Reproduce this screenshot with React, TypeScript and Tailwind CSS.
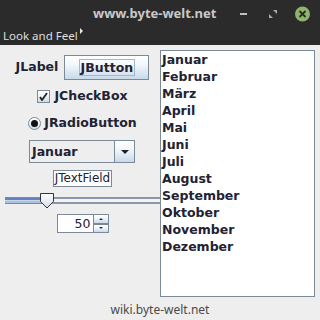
const months = [
  'Januar',
  'Februar',
  'März',
  'April',
  'Mai',
  'Juni',
  'Juli',
  'August',
  'September',
  'Oktober',
  'November',
  'Dezember'
];

const dialog = "font-['DejaVu_Sans',sans-serif]";
const ocean = 'bg-[linear-gradient(to_bottom,#ffffff_0%,#f4f8fc_35%,#dde8f3_70%,#c8d9ea_100%)]';

function TitleBar() {
  return (
    <div className="flex h-[28px] items-center bg-[#2b2b2b]">
      <span className="ml-[93px] font-['Noto_Sans',sans-serif] text-[13px] font-bold text-[#c9c9c9]">
        www.byte-welt.net
      </span>
      {/* window controls: minimize, restore, close */}
      <svg width="84" height="28" viewBox="0 0 84 28" className="ml-auto shrink-0">
        <path d="M4 14h7" stroke="#c0c0c0" strokeWidth="2" />
        <path d="M37 10h4v4zM33 14l4 4h-4z" fill="#a8a8a8" />
        <circle cx="66.5" cy="14" r="7.5" fill="#8db66a" />
        <path d="M63.5 11l6 6M69.5 11l-6 6" stroke="#2b2b2b" strokeWidth="1.8" />
      </svg>
    </div>
  );
}

function MenuBar() {
  return (
    <div className="flex h-[17px] items-start bg-[#2b2b2b] pl-[3px]">
      <span className="mt-[-1px] font-['Noto_Sans',sans-serif] text-[11.5px] leading-[17px] text-[#dedede]">
        Look and Feel
      </span>
      <span className="ml-[2px] h-0 w-0 border-y-[3.5px] border-l-[3px] border-y-transparent border-l-[#e8e8e8]" />
    </div>
  );
}

function Slider() {
  return (
    <div className="relative mt-[4px] h-[18px] w-full">
      <div className="absolute left-0 right-0 top-[6px] flex h-[7px]">
        <div className="flex w-[38px] flex-col">
          <div className="h-[1px] bg-[#7a8a99]" />
          <div className="h-[2px] bg-[#6382bf]" />
          <div className="h-[1px] bg-[#c9d8ea]" />
          <div className="h-[2px] bg-[#a9c0de]" />
          <div className="h-[1px] bg-[#7a8a99]" />
        </div>
        <div className="flex flex-1 flex-col">
          <div className="h-[2px] bg-[#8a97a4]" />
          <div className="h-[3px] bg-[#f4f4f4]" />
          <div className="h-[2px] bg-[#8a97a4]" />
        </div>
      </div>
      <svg width="16" height="18" viewBox="0 0 16 18" className="absolute left-[34px] top-[1px]">
        <defs>
          <linearGradient id="thumb" x1="0" y1="0" x2="0" y2="1">
            <stop offset="0" stopColor="#ffffff" />
            <stop offset="1" stopColor="#cfdcea" />
          </linearGradient>
        </defs>
        <path d="M1.5 1.5h13v8l-6.5 6.5-6.5-6.5z" fill="url(#thumb)" stroke="#333333" strokeWidth="1" />
      </svg>
    </div>
  );
}

export default function App() {
  return (
    <div className={`flex h-[320px] w-[320px] flex-col bg-[#eeeeee] ${dialog}`}>
      <TitleBar />
      <MenuBar />

      <div className="flex h-[252px]">
        <div className="ml-[5px] flex w-[155px] flex-col items-center text-[#222233]">
          <div className="mt-[10px] flex h-[25px] items-center">
            <span className="mr-[6px] text-[12.5px] font-bold">JLabel</span>
            <div className={`flex h-[25px] w-[85px] items-center justify-center border border-[#7a8a99] ${ocean}`}>
              <span className="border border-[#a3b8cc] px-[1px] text-[12.5px] font-bold leading-[15px]">
                JButton
              </span>
            </div>
          </div>

          <div className="mt-[8px] flex h-[17px] items-center">
            <span className={`flex h-[13px] w-[13px] items-center justify-center border border-[#7a8a99] ${ocean}`}>
              <svg width="9" height="9" viewBox="0 0 9 9">
                <path d="M1 5l2 3 5-7" fill="none" stroke="#222222" strokeWidth="1.8" />
              </svg>
            </span>
            <span className="ml-[4px] text-[12.5px] font-bold">JCheckBox</span>
          </div>

          <div className="mt-[10px] flex h-[17px] items-center">
            <span className={`flex h-[13px] w-[13px] items-center justify-center rounded-full border border-[#7a8a99] ${ocean}`}>
              <span className="h-[7px] w-[7px] rounded-full bg-[#111111]" />
            </span>
            <span className="ml-[3px] text-[12.5px] font-bold">JRadioButton</span>
          </div>

          <div className="ml-[-1px] mt-[8px] flex h-[23px] w-[106px] border border-[#7a8a99] bg-[#eeeeee]">
            <span className="flex-1 pl-[2px] text-[12.5px] font-bold leading-[21px]">Januar</span>
            <span className={`flex w-[20px] items-center justify-center border-l border-[#7a8a99] ${ocean}`}>
              <span className="h-0 w-0 border-x-[4px] border-t-[4px] border-x-transparent border-t-[#222222]" />
            </span>
          </div>

          <div className="mt-[7px] h-[17px] border border-[#7a8a99] bg-white px-[1px] text-[12px] leading-[15px]">
            JTextField
          </div>

          <Slider />

          <div className="mt-[5px] flex h-[19px] w-[52px] border border-[#7a8a99] bg-white">
            <span className="flex-1 pr-[2px] text-right text-[12.5px] leading-[17px] text-[#222233]">50</span>
            <div className="flex w-[15px] flex-col border-l border-[#7a8a99]">
              <span className={`flex flex-1 items-center justify-center border-b-2 border-[#7a8a99] ${ocean}`}>
                <span className="h-0 w-0 border-x-[2px] border-b-[2px] border-x-transparent border-b-[#333333]" />
              </span>
              <span className={`flex flex-1 items-center justify-center ${ocean}`}>
                <span className="h-0 w-0 border-x-[2px] border-t-[2px] border-x-transparent border-t-[#333333]" />
              </span>
            </div>
          </div>
        </div>

        <div className="mt-[5px] h-[247px] w-[155px] border border-[#7a8a99] bg-white pl-[1px]">
          {months.map((m) => (
            <div key={m} className="h-[17px] text-[12.5px] font-bold leading-[17px] text-[#222233]">
              {m}
            </div>
          ))}
        </div>
      </div>

      <div className="flex h-[23px] items-center justify-center pt-[3px] font-['Noto_Sans',sans-serif] text-[12px] text-[#4a4a4a]">
        wiki.byte-welt.net
      </div>
    </div>
  );
}
